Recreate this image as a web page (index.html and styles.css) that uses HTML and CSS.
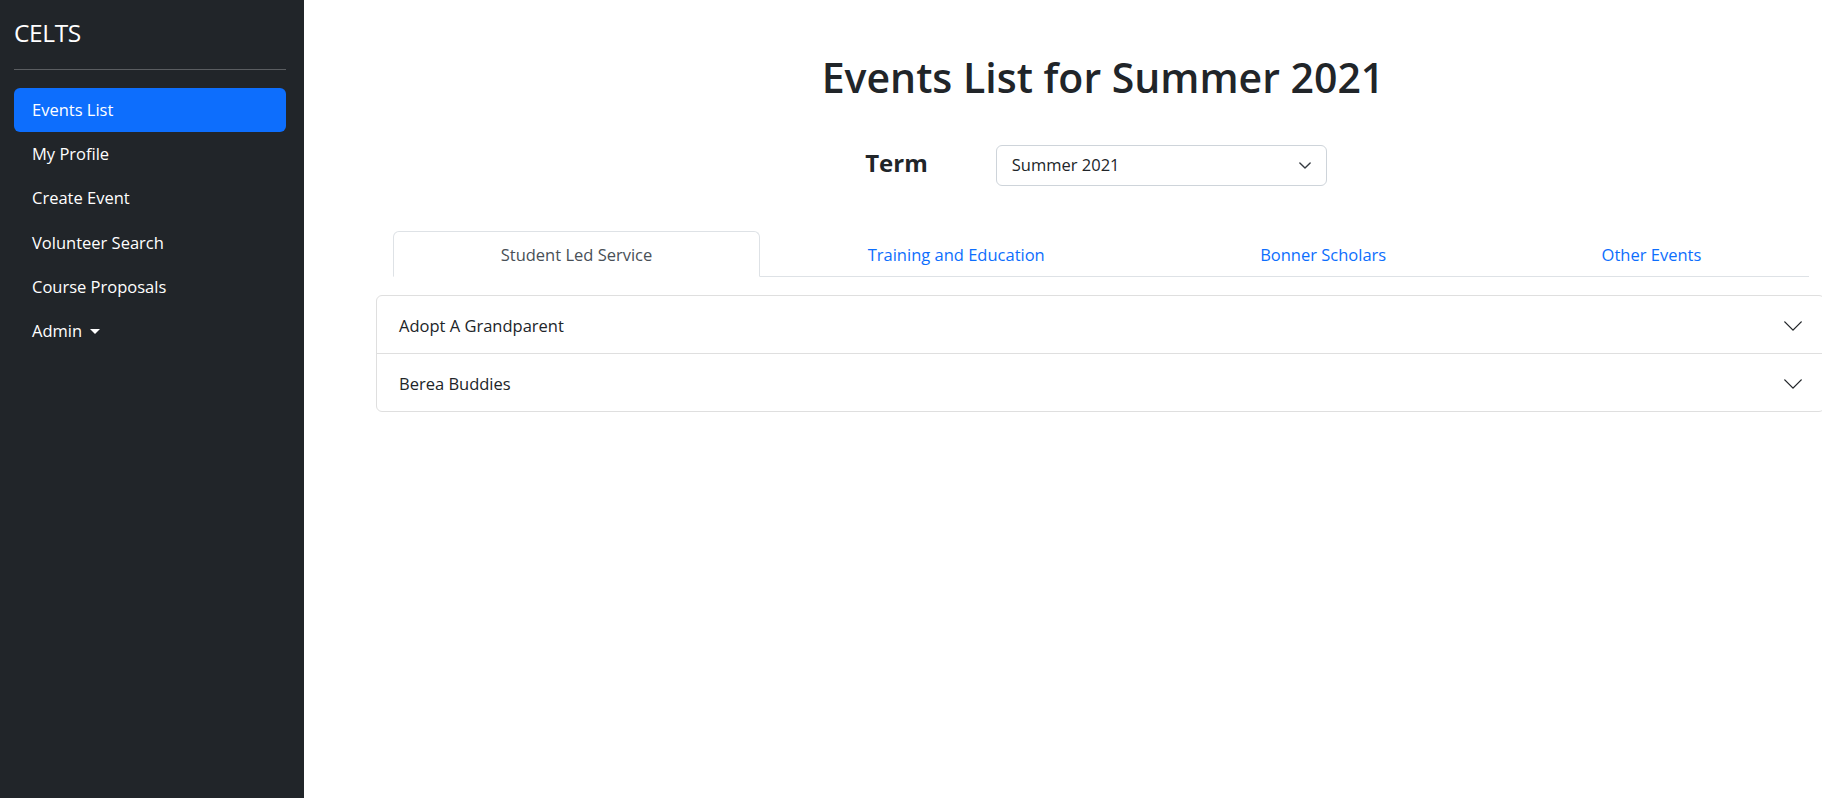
FILE: index.html
```html
<!DOCTYPE html>
<html lang="en">
<head>
<meta charset="utf-8">
<title>Events List</title>
<link rel="stylesheet" href="styles.css">
</head>
<body>
<div class="layout">
  <aside class="sidebar">
    <a class="brand" href="#">CELTS</a>
    <hr class="divider">
    <ul class="side-nav">
      <li><a class="side-link active" href="#">Events List</a></li>
      <li><a class="side-link" href="#">My Profile</a></li>
      <li><a class="side-link" href="#">Create Event</a></li>
      <li><a class="side-link" href="#">Volunteer Search</a></li>
      <li><a class="side-link" href="#">Course Proposals</a></li>
      <li><a class="side-link dropdown-toggle" href="#">Admin</a></li>
    </ul>
  </aside>
  <main class="main">
    <div class="content">
      <h1 class="page-title">Events List for Summer 2021</h1>
      <div class="term-row">
        <label class="term-label" for="term">Term</label>
        <div class="select">
          <span class="select-value">Summer 2021</span>
          <svg class="select-arrow" viewBox="1 4 14 8" width="12" height="7"><path d="M2 5l6 6 6-6" fill="none" stroke="#343a40" stroke-width="1.6" stroke-linecap="round" stroke-linejoin="round"/></svg>
        </div>
      </div>
      <ul class="tabs">
        <li class="tab"><a class="tab-link active" href="#">Student Led Service</a></li>
        <li class="tab"><a class="tab-link" href="#">Training and Education</a></li>
        <li class="tab"><a class="tab-link" href="#">Bonner Scholars</a></li>
        <li class="tab"><a class="tab-link" href="#">Other Events</a></li>
      </ul>
      <div class="accordion">
        <div class="acc-item">
          <button class="acc-button">Adopt A Grandparent
            <svg class="acc-icon" viewBox="0 0 16 16" width="22" height="22"><path fill-rule="evenodd" fill="#212529" d="M1.646 4.646a.5.5 0 0 1 .708 0L8 10.293l5.646-5.647a.5.5 0 0 1 .708.708l-6 6a.5.5 0 0 1-.708 0l-6-6a.5.5 0 0 1 0-.708z"/></svg>
          </button>
        </div>
        <div class="acc-item">
          <button class="acc-button">Berea Buddies
            <svg class="acc-icon" viewBox="0 0 16 16" width="22" height="22"><path fill-rule="evenodd" fill="#212529" d="M1.646 4.646a.5.5 0 0 1 .708 0L8 10.293l5.646-5.647a.5.5 0 0 1 .708.708l-6 6a.5.5 0 0 1-.708 0l-6-6a.5.5 0 0 1 0-.708z"/></svg>
          </button>
        </div>
      </div>
    </div>
  </main>
</div>
</body>
</html>
```

FILE: styles.css
```css
* { box-sizing: border-box; }

html, body {
  margin: 0;
  padding: 0;
  height: 100%;
  overflow: hidden;
}

body {
  font-family: "Open Sans", "Noto Sans", "Liberation Sans", sans-serif;
  font-size: 17.6px;
  line-height: 1.5;
  color: #212529;
  background: #fff;
}

.layout {
  display: flex;
  height: 798px;
}

.sidebar {
  width: 304px;
  flex: 0 0 304px;
  background: #212529;
  padding: 17px 18px 14px 14px;
  display: flex;
  flex-direction: column;
}

.brand {
  color: #fff;
  text-decoration: none;
  font-size: 24.5px;
  letter-spacing: -0.4px;
  line-height: 32px;
  display: block;
}

.divider {
  border: 0;
  border-top: 1px solid #5a5d60;
  margin: 20px 0 18px;
  height: 0;
}

.side-nav {
  list-style: none;
  margin: 0;
  padding: 0;
  display: flex;
  flex-direction: column;
}

.side-link {
  display: block;
  color: #fff;
  text-decoration: none;
  padding: 9px 18px;
  line-height: 26.2px;
  font-size: 16.5px;
  border-radius: 6px;
}

.side-link.active {
  background: #0d6efd;
}

.dropdown-toggle::after {
  content: "";
  display: inline-block;
  margin-left: 8px;
  vertical-align: 3px;
  border-top: 5px solid #fff;
  border-left: 5px solid transparent;
  border-right: 5px solid transparent;
}

.main {
  flex: 1;
  min-width: 0;
}

.content {
  padding: 0 13px 0 89px;
}

.page-title {
  margin: 51px 0 0;
  padding-left: 4px;
  font-size: 41px;
  line-height: 52px;
  font-weight: 600;
  text-align: center;
  color: #212529;
}

.term-row {
  display: flex;
  justify-content: center;
  align-items: center;
  gap: 68px;
  margin-top: 42px;
  padding-right: 10px;
}

.term-label {
  font-size: 24px;
  font-weight: 700;
  line-height: 32px;
  margin-bottom: 5px;
}

.select {
  width: 331px;
  height: 41px;
  border: 1px solid #ced4da;
  border-radius: 6px;
  display: flex;
  align-items: center;
  justify-content: space-between;
  padding: 0 15px 0 15px;
}

.select-value {
  font-size: 16.5px;
}

.select-arrow {
  flex: 0 0 12px;
}

.tabs {
  list-style: none;
  margin: 45px 0 0;
  padding: 0;
  display: flex;
  border-bottom: 1px solid #dee2e6;
}

.tab {
  flex: 1 1 auto;
  text-align: center;
}

.tab-link {
  display: block;
  padding: 10px 17px 8px;
  line-height: 26px;
  font-size: 16.5px;
  color: #0d6efd;
  text-decoration: none;
  border: 1px solid transparent;
  border-top-left-radius: 6px;
  border-top-right-radius: 6px;
  margin-bottom: -1px;
}

.tab-link.active {
  color: #495057;
  background: #fff;
  border-color: #dee2e6 #dee2e6 #fff;
}

.accordion {
  margin: 18px -16px 0 -17px;
  border: 1px solid #dfdfdf;
  border-radius: 6px;
}

.acc-item + .acc-item {
  border-top: 1px solid #dfdfdf;
}

.acc-button {
  width: 100%;
  display: flex;
  align-items: center;
  justify-content: space-between;
  padding: 16px 20px 14px 22px;
  line-height: 27px;
  font-family: inherit;
  font-size: 16.5px;
  color: #212529;
  background: transparent;
  border: 0;
  text-align: left;
}

.acc-icon {
  flex: 0 0 22px;
}
```
